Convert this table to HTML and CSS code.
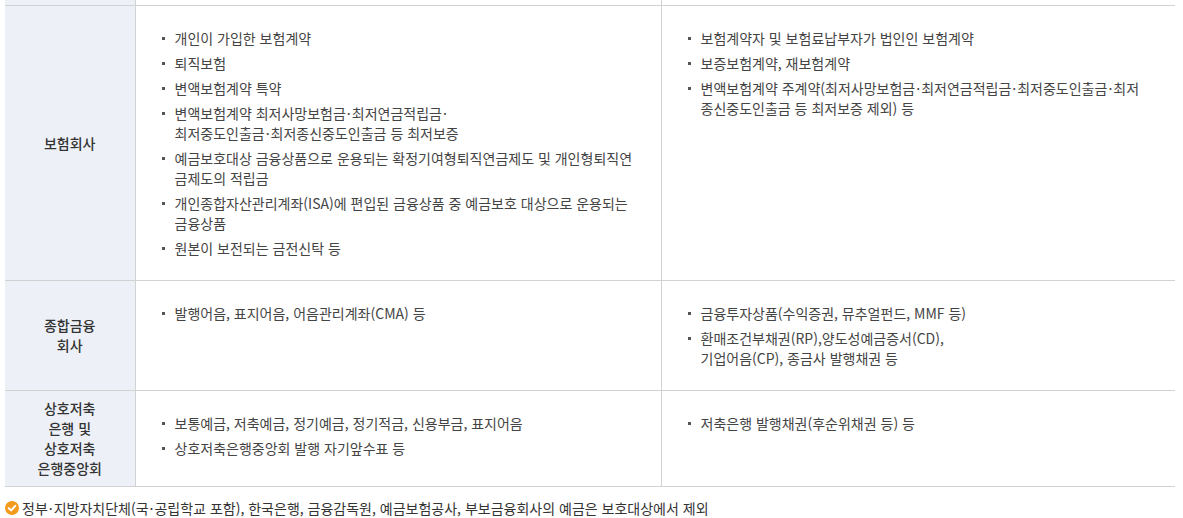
FILE: index.html
```html
<!DOCTYPE html>
<html lang="ko">
<head>
<meta charset="utf-8">
<link rel="stylesheet" href="styles.css">
</head>
<body>
<div class="wrap">
  <table class="tbl">
    <colgroup>
      <col class="c1"><col class="c2"><col class="c3">
    </colgroup>
    <tr class="stub"><th></th><td></td><td></td></tr>
    <tr>
      <th>보험회사</th>
      <td>
        <ul class="list">
          <li>개인이 가입한 보험계약</li>
          <li>퇴직보험</li>
          <li>변액보험계약 특약</li>
          <li>변액보험계약 최저사망보험금<span class="dot">·</span>최저연금적립금<span class="dot">·</span><br>최저중도인출금<span class="dot">·</span>최저종신중도인출금 등 최저보증</li>
          <li>예금보호대상 금융상품으로 운용되는 확정기여형퇴직연금제도 및 개인형퇴직연금제도의 적립금</li>
          <li>개인종합자산관리계좌(ISA)에 편입된 금융상품 중 예금보호 대상으로 운용되는 금융상품</li>
          <li>원본이 보전되는 금전신탁 등</li>
        </ul>
      </td>
      <td>
        <ul class="list">
          <li>보험계약자 및 보험료납부자가 법인인 보험계약</li>
          <li>보증보험계약, 재보험계약</li>
          <li>변액보험계약 주계약(최저사망보험금<span class="dot">·</span>최저연금적립금<span class="dot">·</span>최저중도인출금<span class="dot">·</span>최저<br>종신중도인출금 등 최저보증 제외) 등</li>
        </ul>
      </td>
    </tr>
    <tr>
      <th>종합금융<br>회사</th>
      <td>
        <ul class="list">
          <li>발행어음, 표지어음, 어음관리계좌(CMA) 등</li>
        </ul>
      </td>
      <td>
        <ul class="list">
          <li>금융투자상품(수익증권, 뮤추얼펀드, MMF 등)</li>
          <li>환매조건부채권(RP),양도성예금증서(CD),<br>기업어음(CP), 종금사 발행채권 등</li>
        </ul>
      </td>
    </tr>
    <tr class="last">
      <th>상호저축<br>은행 및<br>상호저축<br>은행중앙회</th>
      <td>
        <ul class="list">
          <li>보통예금, 저축예금, 정기예금, 정기적금, 신용부금, 표지어음</li>
          <li>상호저축은행중앙회 발행 자기앞수표 등</li>
        </ul>
      </td>
      <td>
        <ul class="list">
          <li>저축은행 발행채권(후순위채권 등) 등</li>
        </ul>
      </td>
    </tr>
  </table>
  <p class="note">
    <svg class="chk" width="14" height="14" viewBox="0 0 14 14"><circle cx="7" cy="7" r="7" fill="#f39a1f"/><path d="M3.8 7.2 L6.1 9.4 L10.3 4.9" fill="none" stroke="#fff" stroke-width="2" stroke-linecap="round" stroke-linejoin="round"/></svg>
    <span>정부<span class="dot">·</span>지방자치단체(국<span class="dot">·</span>공립학교 포함), 한국은행, 금융감독원, 예금보험공사, 부보금융회사의 예금은 보호대상에서 제외</span>
  </p>
</div>
</body>
</html>
```

FILE: styles.css
```css
html, body {
  margin: 0;
  padding: 0;
  background: #fff;
}
body {
  font-family: "Noto Sans CJK KR", "Noto Sans", sans-serif;
  font-size: 14px;
  color: #444;
}
.wrap {
  padding: 0 8px 0 5px;
}
.tbl {
  width: 1170px;
  border-collapse: collapse;
  table-layout: fixed;
}
.c1 { width: 130px; }
.c2 { width: 526px; }
.c3 { width: 514px; }
.tbl th,
.tbl td {
  border-bottom: 1px solid #d2d2d2;
  border-left: 1px solid #d2d2d2;
  line-height: 20px;
}
.tbl th {
  border-left: none;
  background: #edf1f7;
  color: #333;
  font-weight: 500;
  text-align: center;
  vertical-align: middle;
  padding: 7px 4px 8px;
}
.tbl td {
  vertical-align: top;
  padding: 22px 28px 22px 26px;
}
.tbl tr.stub th,
.tbl tr.stub td {
  height: 5px;
  padding: 0;
}
.list {
  list-style: none;
  margin: 0;
  padding: 0;
}
.list li {
  position: relative;
  padding-left: 13px;
}
.list li + li {
  margin-top: 5px;
}
.list li::before {
  content: "";
  position: absolute;
  left: 0;
  top: 9px;
  width: 3px;
  height: 3px;
  background: #555;
}
.dot {
  padding: 0 1px;
}
.note {
  margin: 11px 0 0;
  display: flex;
  align-items: center;
  gap: 3px;
  color: #333;
  line-height: 20px;
}
.chk {
  flex: none;
}
```
